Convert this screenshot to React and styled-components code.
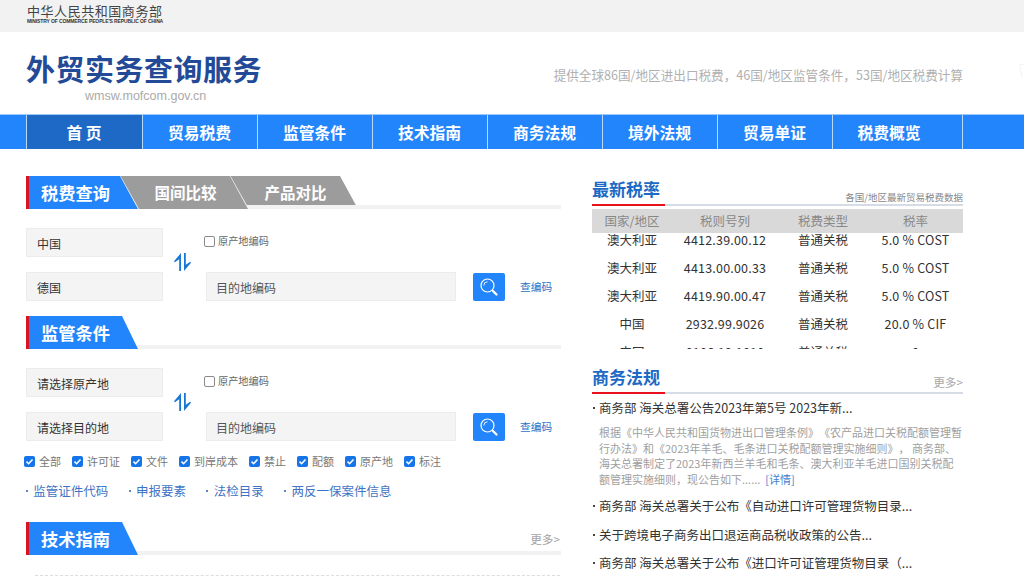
import styled, { createGlobalStyle } from 'styled-components';

const GlobalStyle = createGlobalStyle`
   html, body {
      margin: 0;
      padding: 0;
      background: #fff;
      overflow: hidden;
   }
   body {
      width: 1024px;
      height: 576px;
      font-family: "Noto Sans CJK SC", "Liberation Sans", sans-serif;
      text-spacing-trim: space-all;
   }
`;

const Page = styled.div`
   width: 1024px;
   height: 576px;
   overflow: hidden;
   position: relative;
`;

const TopBar = styled.div`
   height: 32px;
   background-color: #f2f2f2;
   padding: 3px 0 0 27px;
   box-sizing: border-box;
`;
const LogoCn = styled.div`
   font-size: 13px;
   line-height: 15px;
   letter-spacing: 0.55px;
   color: #444;
   width: 140px;
   white-space: nowrap;
`;
const LogoEn = styled.div`
   font-family: "Liberation Sans", sans-serif;
   font-size: 5px;
   line-height: 7px;
   letter-spacing: -0.12px;
   color: #333;
   font-weight: 700;
   white-space: nowrap;
`;

const Header = styled.div`
   height: 82px;
   display: flex;
   justify-content: space-between;
   padding: 18px 61px 0 26px;
   box-sizing: border-box;
`;
const Brand = styled.div`
   display: flex;
   flex-direction: column;
`;
const BrandTitle = styled.h1`
   margin: 0;
   font-size: 29px;
   line-height: 36px;
   letter-spacing: 0.5px;
   font-weight: 700;
   color: #234a97;
   white-space: nowrap;
`;
const BrandUrl = styled.div`
   font-family: "Liberation Sans", sans-serif;
   font-size: 12.5px;
   line-height: 15px;
   color: #aaa;
   margin-left: 59px;
   margin-top: 3px;
`;
const Slogan = styled.div`
   font-size: 12.6px;
   line-height: 20px;
   color: #b0b0b0;
   margin-top: 15px;
   white-space: nowrap;
`;
const CornerMark = styled.svg`
   position: absolute;
   right: 0;
   top: 64px;
`;

const Nav = styled.nav`
   height: 35px;
   background-color: #2285fb;
   border-top: 1px solid #9cc8f5;
   box-sizing: border-box;
   display: flex;
   padding-left: 26px;
`;
const NavItem = styled.a`
   width: ${(p) => p.$width}px;
   padding-right: ${(p) => (p.$last ? '17px' : '1px')};
   box-sizing: border-box;
   border-left: 1px solid #b9d9fb;
   background-color: ${(p) => (p.$active ? '#1e69c5' : 'transparent')};
   color: #fff;
   font-size: 15.8px;
   font-weight: 700;
   line-height: 35px;
   text-align: center;
   white-space: pre;
   &:last-child {
      border-right: 1px solid #b9d9fb;
   }
`;

const Body = styled.div`
   display: flex;
   padding: 27px 0 0 26px;
`;
const LeftCol = styled.div`
   width: 535px;
   flex-shrink: 0;
`;
const RightCol = styled.div`
   width: 371px;
   margin-left: 31px;
   flex-shrink: 0;
`;

const SectionHead = styled.div`
   height: 33px;
   display: flex;
   position: relative;
   border-left: 3px solid #d9141e;
   margin-top: ${(p) => p.$top || 0}px;
   &::after {
      content: '';
      position: absolute;
      left: 100px;
      right: 0;
      bottom: 0;
      height: 4px;
      background-color: #f2f2f2;
   }
`;
const MainTab = styled.div`
   position: relative;
   z-index: 2;
   width: 109px;
   height: 33px;
   background-color: #2285fb;
   color: #fff;
   font-size: 17.3px;
   font-weight: 700;
   line-height: 33px;
   padding-left: 12px;
   box-sizing: border-box;
   clip-path: polygon(0 0, calc(100% - ${(p) => p.$slant}px) 0, 100% 100%, 0 100%);
`;
const GreyTab = styled.div`
   position: relative;
   z-index: ${(p) => p.$z};
   width: 128px;
   height: 33px;
   margin-left: -18px;
   padding-left: 3px;
   box-sizing: border-box;
   background-color: #9c9c9c;
   color: #fff;
   font-size: 15.5px;
   font-weight: 700;
   line-height: 33px;
   text-align: center;
   clip-path: polygon(0.5px 0, calc(100% - 18px) 0, 100% 100%, 19px 100%);
`;
const More = styled.span`
   position: absolute;
   z-index: 2;
   right: 1px;
   bottom: 9px;
   font-size: 11.7px;
   line-height: 14px;
   color: #a3a3a3;
`;

const FormBlock = styled.div`
   display: grid;
   grid-template-columns: 137px 43px 250px 17px 32px 15px auto;
   grid-template-rows: 29px 29px;
   row-gap: 15px;
   margin-top: 19px;
   align-items: center;
`;
const Field = styled.div`
   grid-column: ${(p) => p.$col};
   height: 29px;
   box-sizing: border-box;
   background-color: #f4f4f4;
   border: 1px solid #ececec;
   font-size: 12px;
   line-height: 29px;
   padding-left: ${(p) => (p.$wide ? 9 : 10)}px;
   color: ${(p) => (p.$wide ? '#555' : '#333')};
`;
const SwapCell = styled.div`
   grid-column: 2;
   grid-row: 1 / span 2;
   align-self: start;
   padding-left: 11px;
   margin-top: 25px;
   line-height: 0;
`;
const CodeCheck = styled.label`
   grid-column: 3;
   grid-row: 1;
   display: flex;
   align-items: center;
   margin-left: -2px;
   margin-top: -3px;
   font-size: 10.2px;
   line-height: 14px;
   color: #666;
`;
const SmallBox = styled.span`
   width: 9px;
   height: 9px;
   border: 1px solid #8a8a8a;
   border-radius: 2px;
   background: #fff;
   margin-right: 3px;
`;
const SearchButton = styled.button`
   grid-column: 5;
   grid-row: 2;
   width: 32px;
   height: 28px;
   padding: 0;
   border: none;
   border-radius: 2px;
   background-color: #2285fb;
   display: flex;
   align-items: center;
   justify-content: center;
`;
const CodeLink = styled.a`
   grid-column: 7;
   grid-row: 2;
   font-size: 10.7px;
   color: #2a72c8;
   white-space: nowrap;
`;

const CheckRow = styled.div`
   display: flex;
   margin-top: 13px;
   margin-left: -2px;
   height: 14px;
   align-items: center;
`;
const CheckItem = styled.span`
   display: flex;
   align-items: center;
   font-size: 11px;
   color: #777;
   margin-right: 11px;
   white-space: nowrap;
`;
const CheckBox = styled.span`
   width: 11px;
   height: 11px;
   border-radius: 2px;
   background-color: #1574e8;
   margin-right: 4px;
   line-height: 0;
`;

const LinkRow = styled.div`
   display: flex;
   margin-top: 14px;
   height: 18px;
   align-items: center;
`;
const DotLink = styled.a`
   position: relative;
   padding-left: 7.3px;
   font-size: 12.5px;
   line-height: 18px;
   color: #3f73c4;
   margin-right: 20.4px;
   white-space: nowrap;
   &::before {
      content: '';
      position: absolute;
      left: 0;
      top: 8px;
      width: 2px;
      height: 2px;
      background-color: #5b86cc;
   }
`;

const DashLine = styled.div`
   margin: 20px 1px 0 9px;
   border-top: 1px dashed #ddd;
`;

const RightHead = styled.div`
   height: 30px;
   box-sizing: border-box;
   display: flex;
   justify-content: space-between;
   align-items: flex-end;
   position: relative;
   border-bottom: 2px solid #d6dce6;
   margin-top: ${(p) => p.$top || 0}px;
`;
const RightTitle = styled.h2`
   margin: 0;
   height: 28px;
   width: 73px;
   font-size: 17px;
   line-height: 25px;
   font-weight: 700;
   color: #1c6ac4;
   white-space: nowrap;
   position: relative;
   &::after {
      content: '';
      position: absolute;
      left: 0;
      bottom: -2px;
      width: 100%;
      height: 2px;
      background-color: #e8121c;
   }
`;
const RightNote = styled.span`
   font-size: 9.5px;
   line-height: 14px;
   color: #888;
   white-space: nowrap;
`;
const RightMore = styled.span`
   font-size: 11.7px;
   line-height: 14px;
   color: #a8a8a8;
   margin-bottom: 3px;
   white-space: nowrap;
`;

const RateHeader = styled.div`
   display: grid;
   grid-template-columns: 80px 106px 90px 95px;
   height: 24px;
   margin-top: 3px;
   background-color: #d9d9d9;
   color: #888;
   font-size: 12.5px;
   line-height: 24px;
   text-align: center;
`;
const RateScroll = styled.div`
   height: 116px;
   overflow: hidden;
`;
const RateList = styled.div`
   margin-top: -7px;
`;
const RateRow = styled.div`
   display: grid;
   grid-template-columns: 80px 106px 90px 95px;
   height: 28px;
   color: #333;
   font-size: 12.5px;
   line-height: 28px;
   text-align: center;
   white-space: nowrap;
`;
const NumCell = styled.span`
   letter-spacing: 0.2px;
`;

const NewsList = styled.ul`
   list-style: none;
   margin: 4px 0 0;
   padding: 0;
`;
const NewsItem = styled.li`
   font-size: 12.5px;
   line-height: 20px;
   height: ${(p) => p.$h || 28.5}px;
   color: #333;
   padding-left: 7px;
   position: relative;
   white-space: nowrap;
   &::before {
      content: '';
      position: absolute;
      left: 1px;
      top: 9px;
      width: 2px;
      height: 2px;
      background-color: #444;
   }
`;
const NewsDesc = styled.p`
   margin: 7px 0 9px 7px;
   font-size: 11px;
   line-height: 15.5px;
   color: #a0a0a0;
   white-space: nowrap;
`;
const Detail = styled.a`
   color: #3f7fd0;
   margin-left: 5px;
`;

const SearchIcon = () => (
   <svg width="20" height="20" viewBox="0 0 20 20" fill="none" stroke="#fff">
      <circle cx="8.5" cy="8.5" r="6.5" strokeWidth="1.2" />
      <path d="M4.8 8.5a3.7 3.7 0 0 1 3.7-3.7" strokeWidth="0.9" />
      <path d="M13 13l1.2 1.2" strokeWidth="1.1" />
      <path d="M14.2 14.2l3.3 3.3" strokeWidth="2.3" strokeLinecap="round" />
   </svg>
);

const SwapIcon = () => (
   <svg width="17" height="18" viewBox="0 0 17 18" fill="#1a78d2">
      <path d="M7 0v18H5.2V6.2L0.8 9.2 0 8.2z" />
      <path d="M10 18V0h1.8v11.8l4.4-3 0.8 1z" />
   </svg>
);

const TickIcon = () => (
   <svg width="11" height="11" viewBox="0 0 11 11" fill="none">
      <path d="M2.5 5.6l2.1 2.1 3.9-4.2" stroke="#fff" strokeWidth="1.6" />
   </svg>
);

const navs = ['贸易税费', '监管条件', '技术指南', '商务法规', '境外法规', '贸易单证'];
const checks = ['全部', '许可证', '文件', '到岸成本', '禁止', '配额', '原产地', '标注'];
const links = ['监管证件代码', '申报要素', '法检目录', '两反一保案件信息'];
const rates = [
   ['澳大利亚', '4412.39.00.12', '普通关税', '5.0 % COST'],
   ['澳大利亚', '4413.00.00.33', '普通关税', '5.0 % COST'],
   ['澳大利亚', '4419.90.00.47', '普通关税', '5.0 % COST'],
   ['中国', '2932.99.9026', '普通关税', '20.0 % CIF'],
   ['中国', '0106.19.1010', '普通关税', '0'],
];

const QueryForm = ({ from, to }) => (
   <FormBlock>
      <Field $col={1}>{from}</Field>
      <SwapCell>
         <SwapIcon />
      </SwapCell>
      <CodeCheck>
         <SmallBox />
         原产地编码
      </CodeCheck>
      <Field $col={1}>{to}</Field>
      <Field $col={3} $wide>
         目的地编码
      </Field>
      <SearchButton>
         <SearchIcon />
      </SearchButton>
      <CodeLink>查编码</CodeLink>
   </FormBlock>
);

const App = () => {
   return (
      <Page>
         <GlobalStyle />
         <TopBar>
            <LogoCn>中华人民共和国商务部</LogoCn>
            <LogoEn>MINISTRY OF COMMERCE PEOPLE'S REPUBLIC OF CHINA</LogoEn>
         </TopBar>
         <Header>
            <Brand>
               <BrandTitle>外贸实务查询服务</BrandTitle>
               <BrandUrl>wmsw.mofcom.gov.cn</BrandUrl>
            </Brand>
            <Slogan>提供全球86国/地区进出口税费，46国/地区监管条件，53国/地区税费计算</Slogan>
         </Header>
         <CornerMark width="5" height="18" viewBox="0 0 5 18" fill="none">
            <path d="M0.5 1l2.5 12M0.5 1l4.5 -1" stroke="#f2f2f2" />
         </CornerMark>
         <Nav>
            <NavItem $width={116} $active>
               {'首 页'}
            </NavItem>
            {navs.map((n) => (
               <NavItem key={n} $width={115}>
                  {n}
               </NavItem>
            ))}
            <NavItem $width={131} $last>
               税费概览
            </NavItem>
         </Nav>
         <Body>
            <LeftCol>
               <SectionHead>
                  <MainTab $slant={18}>税费查询</MainTab>
                  <GreyTab $z={1}>国间比较</GreyTab>
                  <GreyTab $z={0}>产品对比</GreyTab>
               </SectionHead>
               <QueryForm from="中国" to="德国" />
               <SectionHead $top={15}>
                  <MainTab $slant={16}>监管条件</MainTab>
               </SectionHead>
               <QueryForm from="请选择原产地" to="请选择目的地" />
               <CheckRow>
                  {checks.map((c) => (
                     <CheckItem key={c}>
                        <CheckBox>
                           <TickIcon />
                        </CheckBox>
                        {c}
                     </CheckItem>
                  ))}
               </CheckRow>
               <LinkRow>
                  {links.map((l) => (
                     <DotLink key={l}>{l}</DotLink>
                  ))}
               </LinkRow>
               <SectionHead $top={22}>
                  <MainTab $slant={16}>技术指南</MainTab>
                  <More>更多&gt;</More>
               </SectionHead>
               <DashLine />
            </LeftCol>
            <RightCol>
               <RightHead>
                  <RightTitle>最新税率</RightTitle>
                  <RightNote>各国/地区最新贸易税费数据</RightNote>
               </RightHead>
               <RateHeader>
                  <span>国家/地区</span>
                  <span>税则号列</span>
                  <span>税费类型</span>
                  <span>税率</span>
               </RateHeader>
               <RateScroll>
                  <RateList>
                     {rates.map((r) => (
                        <RateRow key={r[1]}>
                           <span>{r[0]}</span>
                           <NumCell>{r[1]}</NumCell>
                           <span>{r[2]}</span>
                           <NumCell>{r[3]}</NumCell>
                        </RateRow>
                     ))}
                  </RateList>
               </RateScroll>
               <RightHead $top={15}>
                  <RightTitle>商务法规</RightTitle>
                  <RightMore>更多&gt;</RightMore>
               </RightHead>
               <NewsList>
                  <NewsItem $h={20}>商务部 海关总署公告2023年第5号 2023年新...</NewsItem>
                  <NewsDesc>
                     根据《中华人民共和国货物进出口管理条例》《农产品进口关税配额管理暂
                     <br />
                     行办法》和《2023年羊毛、毛条进口关税配额管理实施细则》， 商务部、
                     <br />
                     海关总署制定了2023年新西兰羊毛和毛条、澳大利亚羊毛进口国别关税配
                     <br />
                     额管理实施细则，现公告如下......
                     <Detail>[详情]</Detail>
                  </NewsDesc>
                  <NewsItem>商务部 海关总署关于公布《自动进口许可管理货物目录...</NewsItem>
                  <NewsItem>关于跨境电子商务出口退运商品税收政策的公告...</NewsItem>
                  <NewsItem>商务部 海关总署关于公布《进口许可证管理货物目录（...</NewsItem>
               </NewsList>
            </RightCol>
         </Body>
      </Page>
   );
};

export default App;
